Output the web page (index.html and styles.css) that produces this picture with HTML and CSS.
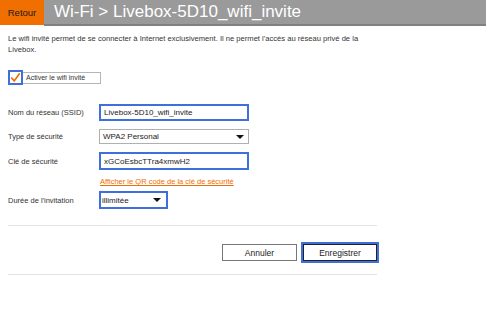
FILE: index.html
```html
<!DOCTYPE html>
<html lang="fr">
<head>
<meta charset="utf-8">
<link rel="stylesheet" href="styles.css">
</head>
<body>
<header class="topbar">
  <div class="back">Retour</div>
  <div class="title">Wi-Fi &gt; Livebox-5D10_wifi_invite</div>
</header>
<main class="content">
  <p class="intro">Le wifi invité permet de se connecter à Internet exclusivement. Il ne permet l'accès au réseau privé de la Livebox.</p>
  <div class="check-row">
    <span class="checkbox">
      <svg width="13" height="13" viewBox="0 0 13 13"><path d="M1.5 6.5 L5 10.5 L11.5 1.5" fill="none" stroke="#f16e00" stroke-width="2"/></svg>
    </span>
    <span class="check-label">Activer le wifi invité</span>
  </div>
  <div class="row row-ssid">
    <span class="label">Nom du réseau (SSID)</span>
    <div class="field focus wide">Livebox-5D10_wifi_invite</div>
  </div>
  <div class="row row-type">
    <span class="label">Type de sécurité</span>
    <div class="select wide">WPA2 Personal<span class="arrow"></span></div>
  </div>
  <div class="row row-key">
    <span class="label">Clé de sécurité</span>
    <div class="field focus wide">xGCoEsbcTTra4xmwH2</div>
  </div>
  <div class="row row-link">
    <span class="label"></span>
    <a class="qr-link" href="#">Afficher le QR code de la clé de sécurité</a>
  </div>
  <div class="row row-duree">
    <span class="label">Durée de l'invitation</span>
    <div class="select focus short">illimitée<span class="arrow"></span></div>
  </div>
  <div class="actions">
    <button class="btn">Annuler</button>
    <button class="btn primary">Enregistrer</button>
  </div>
</main>
</body>
</html>
```
FILE: styles.css
```css
* { box-sizing: border-box; }
html, body { margin: 0; padding: 0; background: #fff; }
body {
  font-family: "Liberation Sans", Arial, sans-serif;
  color: #333;
  width: 486px;
  height: 315px;
  overflow: hidden;
}
.topbar {
  display: flex;
  height: 26px;
}
.back {
  width: 44px;
  height: 25px;
  background: #f16e00;
  color: #1a1a1a;
  font-size: 9.5px;
  display: flex;
  align-items: center;
  justify-content: center;
  padding-bottom: 1px;
}
.title {
  flex: 1;
  background: #9a9a9a;
  border-bottom: 2px solid #808080;
  color: #fff;
  font-size: 17px;
  line-height: 24px;
  padding-left: 10px;
  white-space: nowrap;
}
.content {
  padding: 0 8px;
}
.intro {
  margin: 7px 0 0;
  font-size: 7.6px;
  line-height: 11px;
  width: 362px;
  color: #333;
}
.check-row {
  display: flex;
  align-items: flex-start;
  margin-top: 15px;
  height: 15px;
}
.checkbox {
  width: 15px;
  height: 15px;
  border: 2px solid #3f6fdb;
  background: #fff;
  display: flex;
  align-items: center;
  justify-content: center;
  position: relative;
  z-index: 1;
}
.checkbox svg { display: block; }
.check-label {
  margin-top: 2px;
  margin-left: -1px;
  height: 12px;
  width: 79px;
  border: 1px solid #b5b5b5;
  font-size: 7px;
  line-height: 10px;
  padding-left: 3px;
  color: #333;
}
.row {
  display: flex;
  align-items: center;
}
.label {
  width: 91px;
  font-size: 7.5px;
  color: #333;
  flex: none;
}
.row-ssid { margin-top: 19px; }
.row-type { margin-top: 8px; }
.row-key { margin-top: 8px; }
.row-link { margin-top: 7px; }
.row-duree { margin-top: 5px; }
.field, .select {
  font-size: 8px;
  color: #222;
  display: flex;
  align-items: center;
  padding-left: 3px;
  position: relative;
  background: #fff;
}
.field { height: 17px; border: 2px solid #3f6fdb; }
.row-key .field { height: 18px; }
.wide { width: 150px; }
.select {
  height: 15px;
  border: 1px solid #b0b0b0;
}
.select.focus {
  height: 18px;
  border: 2px solid #3f6fdb;
  padding-left: 1px;
}
.short { width: 69px; }
.arrow {
  position: absolute;
  right: 4px;
  top: 50%;
  margin-top: -2px;
  width: 0;
  height: 0;
  border-left: 4px solid transparent;
  border-right: 4px solid transparent;
  border-top: 4px solid #111;
}
.short .arrow { right: 5px; }
.qr-link {
  font-size: 7.5px;
  color: #f16e00;
  text-decoration: underline;
  margin-left: 1px;
}
.actions {
  margin-top: 16px;
  width: 369px;
  border-top: 1px solid #e2e2e2;
  border-bottom: 1px solid #e2e2e2;
  height: 50px;
  display: flex;
  justify-content: flex-end;
  align-items: flex-start;
  gap: 4px;
  padding-top: 16px;
}
.btn {
  font-family: "Liberation Sans", Arial, sans-serif;
  font-size: 8.5px;
  color: #222;
  background: #fff;
  border: 1px solid #777;
  width: 75px;
  height: 17px;
  padding: 0;
  margin-top: 2px;
}
.btn.primary {
  width: 78px;
  height: 21px;
  margin-top: 0;
  margin-right: -2px;
  border: 2px solid #3f6fdb;
  box-shadow: inset 0 0 0 1px #222;
}
```
